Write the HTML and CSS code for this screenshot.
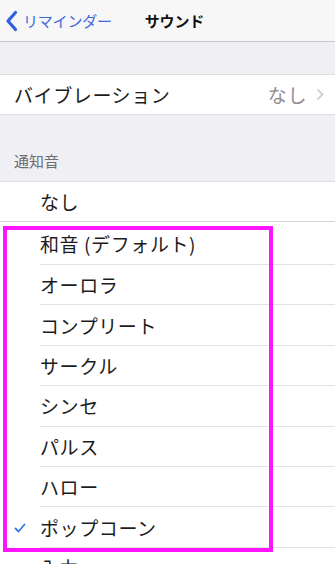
FILE: index.html
```html
<!DOCTYPE html>
<html lang="ja">
<head>
    <meta charset="UTF-8">
    <meta name="viewport" content="width=device-width, initial-scale=1.0">
    <title>サウンド</title>
    <link rel="stylesheet" href="styles.css">
</head>
<body>
    <div class="navbar">
        <div class="back">
            <svg class="back-icon" width="13" height="22" viewBox="0 0 13 22">
                <path d="M10.5 2.5 L3 11 L10.5 19.5" fill="none" stroke="#2f5fe0" stroke-width="3.2" stroke-linecap="round" stroke-linejoin="round"/>
            </svg>
            <span>リマインダー</span>
        </div>
        <div class="title">サウンド</div>
    </div>

    <div class="gap-top"></div>

    <div class="group">
        <div class="row">
            <span class="label">バイブレーション</span>
            <span class="value">なし
                <svg width="8" height="13" viewBox="0 0 8 13"><path d="M1.5 1.5 L6.5 6.5 L1.5 11.5" fill="none" stroke="#c7c7cc" stroke-width="1.6"/></svg>
            </span>
        </div>
    </div>

    <div class="section-header">通知音</div>

    <div class="group list-wrap">
        <div class="row tone full">なし</div>
        <div class="row tone first">和音 (デフォルト)</div>
        <div class="row tone">オーロラ</div>
        <div class="row tone">コンプリート</div>
        <div class="row tone">サークル</div>
        <div class="row tone">シンセ</div>
        <div class="row tone">パルス</div>
        <div class="row tone">ハロー</div>
        <div class="row tone checked">
            <svg class="check" width="12" height="10" viewBox="0 0 12 10">
                <path d="M1.5 5.5 L4.5 8.5 L10.5 1.5" fill="none" stroke="#3478f6" stroke-width="1.8" stroke-linecap="round" stroke-linejoin="round"/>
            </svg>
            ポップコーン
        </div>
        <div class="row tone">入力</div>

        <div class="highlight"></div>
    </div>
</body>
</html>
```

FILE: styles.css
```css
body {
    margin: 0;
    width: 335px;
    height: 564px;
    overflow: hidden;
    background-color: #efeff4;
    font-family: 'Noto Sans CJK JP', 'Noto Sans', sans-serif;
    color: #1c1c1c;
}
.navbar {
    height: 41px;
    background-color: #f7f7f7;
    border-bottom: 1px solid #c8c8cc;
    display: flex;
    align-items: center;
}
.back {
    display: flex;
    align-items: center;
    gap: 5px;
    padding-left: 5px;
    color: #3f67dc;
    font-size: 15px;
    letter-spacing: -0.2px;
}
.back-icon {
    margin-top: 1px;
}
.title {
    margin-left: 33px;
    font-size: 15px;
    font-weight: bold;
    letter-spacing: -0.2px;
    color: #111;
}
.gap-top {
    height: 32px;
    border-bottom: 1px solid #dedee2;
}
.group {
    background-color: #fff;
}
.row {
    display: flex;
    align-items: center;
    box-sizing: border-box;
    font-size: 19px;
    letter-spacing: 0.6px;
}
.group > .row:only-child {
    height: 40px;
    padding: 0 11px 0 14px;
    justify-content: space-between;
    border-bottom: 1px solid #dedee2;
}
.value {
    display: flex;
    align-items: center;
    gap: 9px;
    color: #8e8e93;
}
.section-header {
    height: 67px;
    box-sizing: border-box;
    padding: 0 14px 10px;
    display: flex;
    align-items: flex-end;
    font-size: 15px;
    color: #6d6d72;
    border-bottom: 1px solid #dedee2;
}
.list-wrap {
    position: relative;
}
.tone {
    height: 40.4px;
    margin-left: 40px;
    border-bottom: 1px solid #e2e2e6;
}
.tone.full {
    margin-left: 0;
    padding-left: 40px;
    border-bottom-color: #d4d4d8;
}
.tone.first {
    height: 42.6px;
}
.checked {
    position: relative;
}
.check {
    position: absolute;
    left: -26px;
    top: 16px;
}
.highlight {
    position: absolute;
    left: 3px;
    top: 44px;
    width: 262px;
    height: 318px;
    border: 4px solid #ff14ff;
}
```
